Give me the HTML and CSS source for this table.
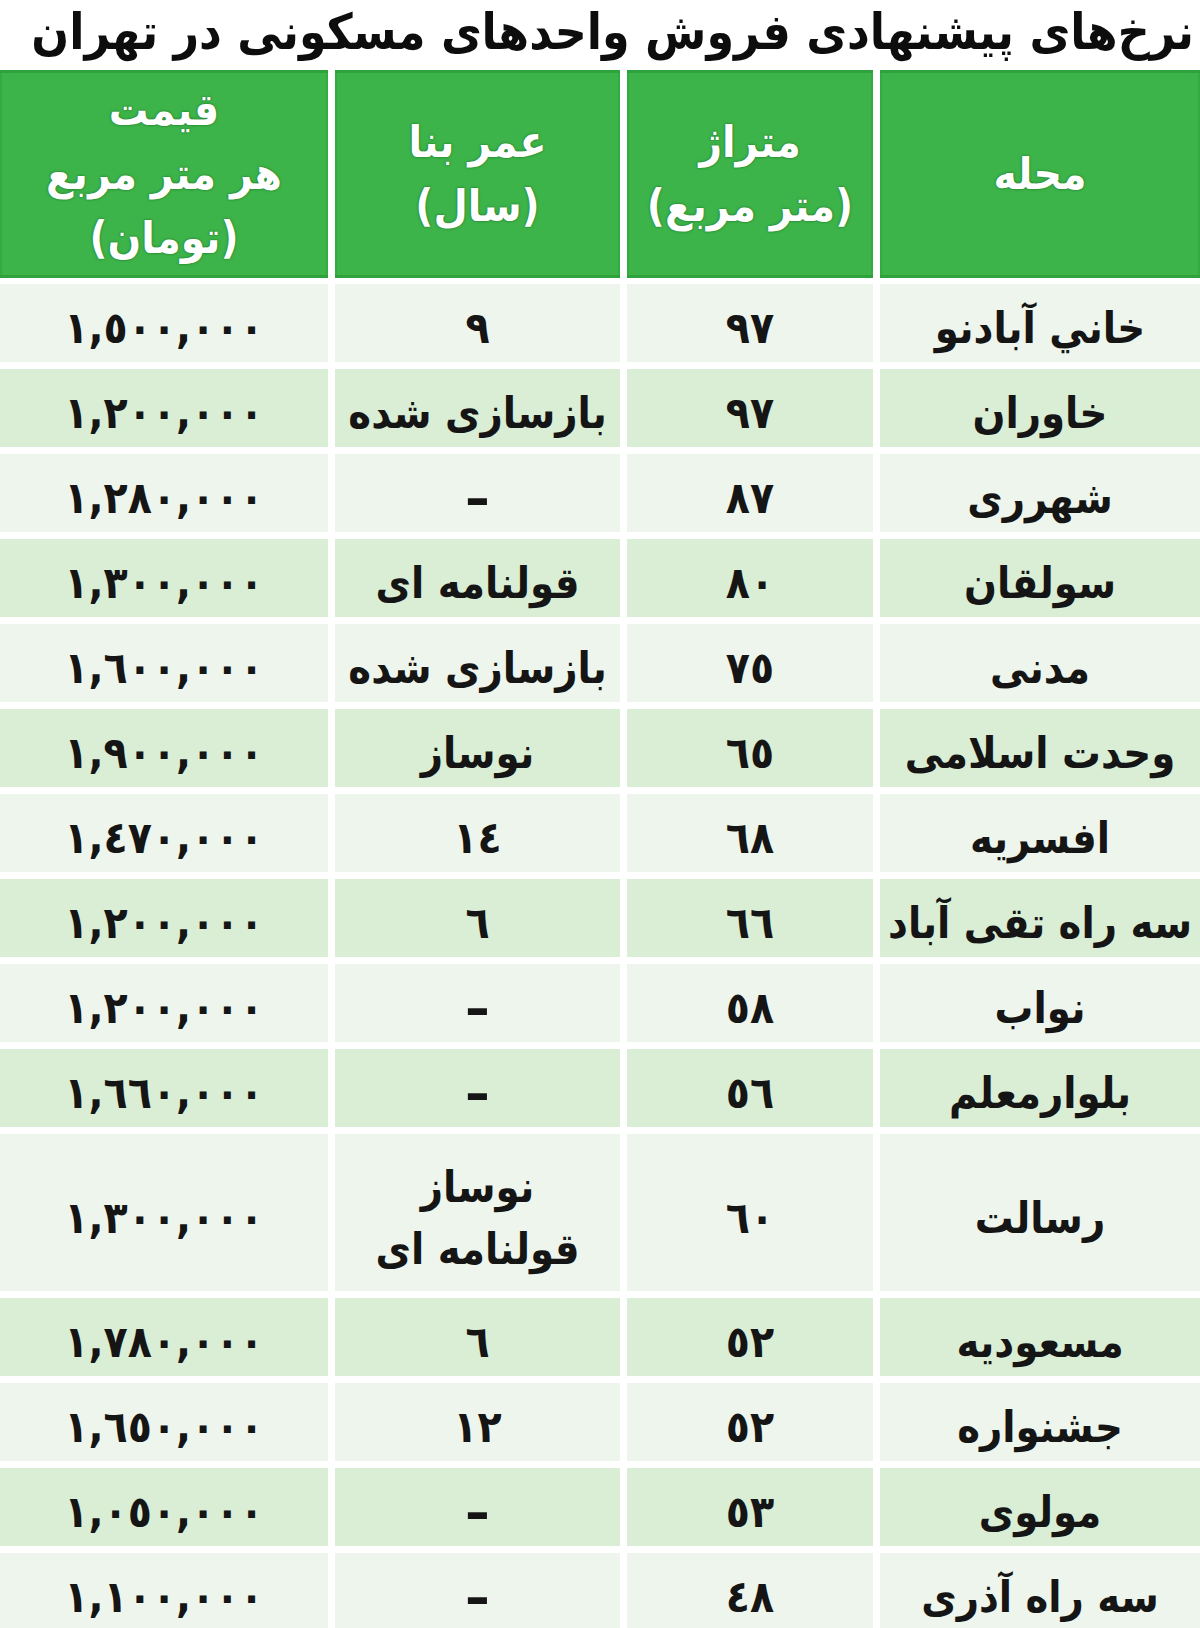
FILE: index.html
```html
<!DOCTYPE html>
<html lang="fa" dir="rtl">
<head>
<meta charset="utf-8">
<title>نرخ‌های پیشنهادی فروش واحدهای مسکونی در تهران</title>
<link rel="stylesheet" href="styles.css">
</head>
<body>
<div class="page">
  <h1 class="title">نرخ‌های پیشنهادی فروش واحدهای مسکونی در تهران</h1>
  <div class="table">
    <div class="row head">
      <div class="cell">محله</div>
      <div class="cell">متراژ<br>(متر مربع)</div>
      <div class="cell">عمر بنا<br>(سال)</div>
      <div class="cell">قیمت<br>هر متر مربع<br>(تومان)</div>
    </div>

    <div class="row light"><div class="cell">خاني آبادنو</div><div class="cell num">٩٧</div><div class="cell num">٩</div><div class="cell num price">١,٥٠٠,٠٠٠</div></div>
    <div class="row dark"><div class="cell">خاوران</div><div class="cell num">٩٧</div><div class="cell">بازسازی شده</div><div class="cell num price">١,٢٠٠,٠٠٠</div></div>
    <div class="row light"><div class="cell">شهرری</div><div class="cell num">٨٧</div><div class="cell dash">–</div><div class="cell num price">١,٢٨٠,٠٠٠</div></div>
    <div class="row dark"><div class="cell">سولقان</div><div class="cell num">٨٠</div><div class="cell">قولنامه ای</div><div class="cell num price">١,٣٠٠,٠٠٠</div></div>
    <div class="row light"><div class="cell">مدنی</div><div class="cell num">٧٥</div><div class="cell">بازسازی شده</div><div class="cell num price">١,٦٠٠,٠٠٠</div></div>
    <div class="row dark"><div class="cell">وحدت اسلامی</div><div class="cell num">٦٥</div><div class="cell">نوساز</div><div class="cell num price">١,٩٠٠,٠٠٠</div></div>
    <div class="row light"><div class="cell">افسریه</div><div class="cell num">٦٨</div><div class="cell num">١٤</div><div class="cell num price">١,٤٧٠,٠٠٠</div></div>
    <div class="row dark"><div class="cell">سه راه تقی آباد</div><div class="cell num">٦٦</div><div class="cell num">٦</div><div class="cell num price">١,٢٠٠,٠٠٠</div></div>
    <div class="row light"><div class="cell">نواب</div><div class="cell num">٥٨</div><div class="cell dash">–</div><div class="cell num price">١,٢٠٠,٠٠٠</div></div>
    <div class="row dark"><div class="cell">بلوارمعلم</div><div class="cell num">٥٦</div><div class="cell dash">–</div><div class="cell num price">١,٦٦٠,٠٠٠</div></div>
    <div class="row light tall"><div class="cell">رسالت</div><div class="cell num">٦٠</div><div class="cell">نوساز<br>قولنامه ای</div><div class="cell num price">١,٣٠٠,٠٠٠</div></div>
    <div class="row dark"><div class="cell">مسعودیه</div><div class="cell num">٥٢</div><div class="cell num">٦</div><div class="cell num price">١,٧٨٠,٠٠٠</div></div>
    <div class="row light"><div class="cell">جشنواره</div><div class="cell num">٥٢</div><div class="cell num">١٢</div><div class="cell num price">١,٦٥٠,٠٠٠</div></div>
    <div class="row dark"><div class="cell">مولوی</div><div class="cell num">٥٣</div><div class="cell dash">–</div><div class="cell num price">١,٠٥٠,٠٠٠</div></div>
    <div class="row light"><div class="cell">سه راه آذری</div><div class="cell num">٤٨</div><div class="cell dash">–</div><div class="cell num price">١,١٠٠,٠٠٠</div></div>
  </div>
</div>
</body>
</html>
```

FILE: styles.css
```css
html, body {
  margin: 0;
  padding: 0;
  background: #ffffff;
}

body {
  font-family: "DejaVu Sans", "Noto Sans", sans-serif;
  font-stretch: condensed;
  color: #111111;
}

.page {
  width: 1200px;
  height: 1628px;
  overflow: hidden;
}

.title {
  margin: 0;
  height: 70px;
  padding-right: 6px;
  font-size: 49.4px;
  line-height: 64px;
  font-weight: bold;
  font-stretch: condensed;
  text-align: right;
  white-space: nowrap;
  color: #0d0d0d;
}

.table {
  display: flex;
  flex-direction: column;
  gap: 7px;
}

.row {
  display: grid;
  grid-template-columns: 320px 246px 285px 328px;
  column-gap: 7px;
  height: 78px;
}

.row.head {
  height: 208px;
  margin-bottom: -1px;
}

.row.tall {
  height: 157px;
}

.cell {
  display: flex;
  align-items: center;
  justify-content: center;
  box-sizing: border-box;
  padding-top: 10px;
  text-align: center;
  white-space: nowrap;
  font-size: 43px;
  font-weight: bold;
  font-stretch: condensed;
  line-height: 62px;
  color: #151515;
}

.head .cell {
  padding-top: 0;
  background: #3db44a;
  box-shadow: inset 0 3px 0 #2ea33c, inset 0 -3px 0 #2ea33c, inset 2px 0 0 #34aa42, inset -2px 0 0 #34aa42;
  color: #ffffff;
  font-size: 44px;
  line-height: 64px;
  text-shadow: 0 0 3px #1f7d2c, 0 0 1px #1f7d2c;
}

.light .cell {
  background: #eef5ec;
}

.dark .cell {
  background: #d9eed5;
}

.num {
  font-size: 44px;
}

.price {
  letter-spacing: 10px;
}

.dash {
  font-size: 54px;
  font-weight: bold;
}
```
